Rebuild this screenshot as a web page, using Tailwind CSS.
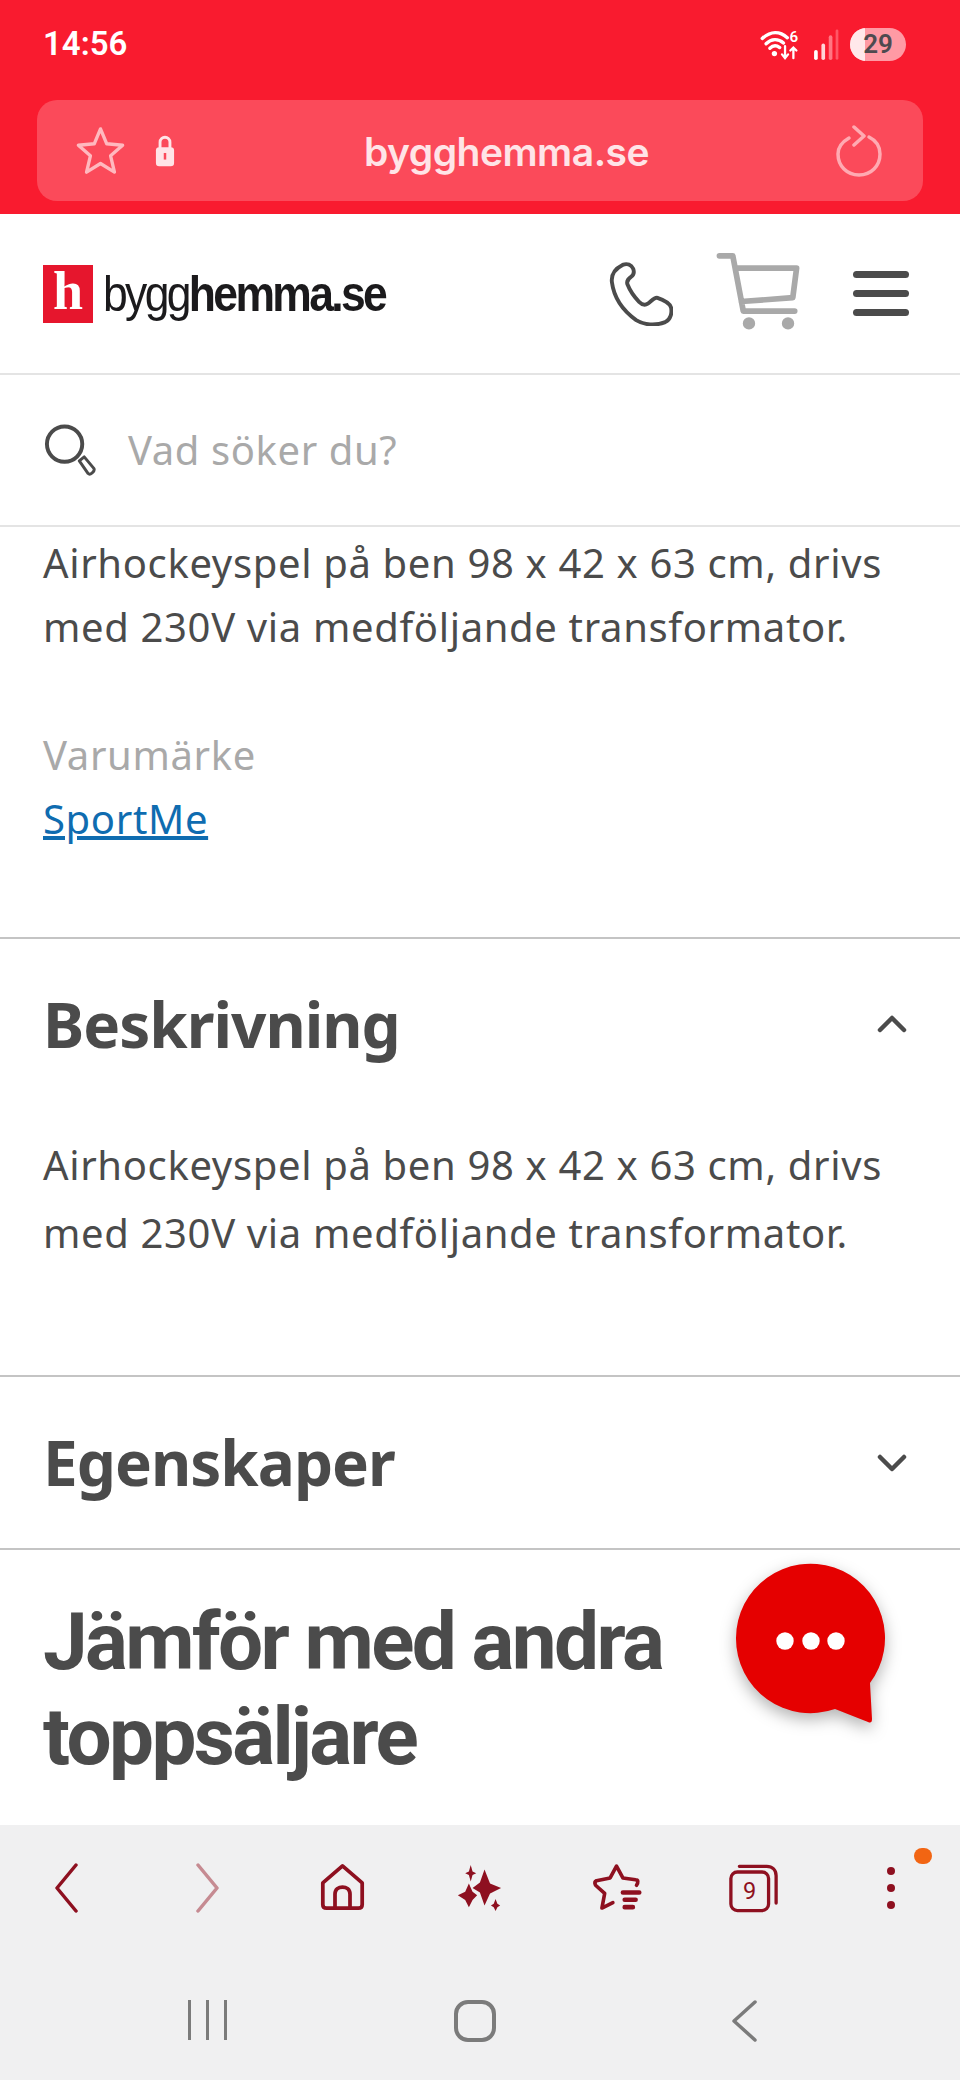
<!DOCTYPE html>
<html><head><meta charset="utf-8"><script src="https://cdn.jsdelivr.net/npm/@tailwindcss/browser@4"></script></head>
<body class="bg-white">
<div class="relative w-[960px] h-[2080px] overflow-hidden bg-white flex flex-col font-['Noto_Sans',sans-serif]">
  <div class="h-[214px] bg-[#f91b2f] shrink-0 flex flex-col">
    <div class="h-[100px] shrink-0 pl-[43px] pr-[54px] flex items-center justify-between">
      <span class="text-white text-[33px] font-semibold font-['Roboto',sans-serif] mt-[-13px]">14:56</span>
      <div class="flex items-center mt-[-12px]">
        <svg width="44" height="31" viewBox="0 0 58 40" fill="none" stroke="#fff" stroke-linecap="round"><path d="M3 12C14 2 26 2 36 11" stroke-width="4.5"/><path d="M8 19C15 12 24 12 31 18" stroke-width="4.5"/><path d="M13 25C17 21 22 21 26 24" stroke-width="4.5"/><circle cx="19" cy="32" r="3.5" fill="#fff" stroke="none"/><path d="M33 22V37M29 33L33 38L37 33M44 38V25M40 28L44 24L48 28" stroke-width="3"/><text x="39" y="17" font-size="20" font-weight="600" font-family="Roboto" fill="#fff" stroke="none">6</text></svg>
        <svg class="ml-[8px]" width="28" height="33" viewBox="0 0 28 36" fill="none" stroke-linecap="round" stroke-width="4"><path d="M3 33V26" stroke="#fff"/><path d="M11 33V19" stroke="#ffd5d8"/><path d="M19 33V10" stroke="#ff7682"/><path d="M26 33V3" stroke="#ff5666" stroke-width="3"/></svg>
        <div class="ml-[10px] w-[56px] h-[33px] rounded-full bg-[#ff9aa4] overflow-hidden relative flex items-center justify-center">
          <div class="absolute left-0 top-0 bottom-0 w-[15px] bg-[#ffe8ea]"></div>
          <span class="relative text-[#4e4a4f] text-[26px] font-semibold font-['Roboto',sans-serif] leading-none">29</span>
        </div>
      </div>
    </div>
    <div class="mx-[37px] h-[101px] rounded-[20px] bg-[#fb4a5a] flex items-center pl-[38px] pr-[41px] relative">
      <svg width="51" height="50" viewBox="0 0 52 52" fill="none" stroke="#ffb9bf" stroke-width="3.5" stroke-linejoin="round"><path d="M26 3L32.5 18.5L49 20L36.5 31L40.5 48L26 39L11.5 48L15.5 31L3 20L19.5 18.5Z"/></svg>
      <svg class="ml-[26px]" width="26" height="33" viewBox="0 0 24 40" fill="none"><path d="M6 17V10C6 2 18 2 18 10V17" stroke="#ffe4e7" stroke-width="3.5"/><rect x="1" y="16" width="22" height="23" rx="4" fill="#ffe4e7"/><rect x="10.5" y="23" width="3" height="8" fill="#fb4a5a"/></svg>
      <span class="absolute left-0 right-0 pl-[53px] pt-[3px] text-center text-[39px] font-semibold text-[#ffe4e7] font-['Inter',sans-serif] tracking-[-0.5px]">bygghemma.se</span>
      <svg class="ml-auto" width="46" height="52" viewBox="0 0 46 52" fill="none" stroke="#ffaab2" stroke-width="3.5" stroke-linecap="round" stroke-linejoin="round"><path d="M13 13C6 17 2 22 2 29C2 41 11 50 23 50C35 50 44 41 44 29C44 22 41 16 33 12"/><path d="M18 2L28 11L18 20"/></svg>
    </div>
  </div>
  <header class="h-[159px] shrink-0 pl-[43px] pr-[51px] flex items-center">
    <div class="w-[50px] h-[58px] bg-[#e6162d] flex items-center justify-center shrink-0">
      <span class="text-white text-[54px] font-bold font-['Liberation_Serif',serif] leading-none mt-[-6px]">h</span>
    </div>
    <div class="ml-[10px] w-[281px] shrink-0 overflow-visible whitespace-nowrap"><span class="inline-block origin-left scale-x-[0.89] text-[50px] leading-none text-[#1b1a1c] font-['Liberation_Sans',sans-serif] tracking-[-3px] mt-[1px]">bygg<span class="font-bold">hemma.se</span></span></div>
    <svg class="ml-auto" width="64" height="64" viewBox="0 0 66 66" fill="none" stroke="#4b4b4b" stroke-width="4" stroke-linejoin="round"><path d="M14 3C6 7 2 13 3 21C5 36 14 50 28 60C36 65 48 66 58 62C64 59 65 52 64 47C63 43 56 39 50 37C47 36 44 40 40 43C37 45 34 44 31 41C26 36 21 28 19 23C18 20 20 17 23 15C26 13 26 10 25 7C23 3 19 1 14 3Z" /></svg>
    <svg class="ml-[43px] mt-[-3px]" width="85" height="80" viewBox="0 0 88 84" fill="none" stroke="#a9a9a9" stroke-width="6" stroke-linecap="round" stroke-linejoin="round"><path d="M3 4H17L28 62H82M21 17H84L80 48L26 52"/><circle cx="34" cy="75" r="3.5" fill="#a9a9a9"/><circle cx="75" cy="75" r="3.5" fill="#a9a9a9"/></svg>
    <div class="ml-[52px] w-[56px] flex flex-col gap-[12px]"><div class="h-[7px] rounded-full bg-[#4b4b4b]"></div><div class="h-[7px] rounded-full bg-[#4b4b4b]"></div><div class="h-[7px] rounded-full bg-[#4b4b4b]"></div></div>
  </header>
  <div class="h-[154px] shrink-0 border-y-2 border-[#e4e4e4] px-[43px] flex items-center">
    <svg width="53" height="52" viewBox="0 0 54 52" fill="none" stroke="#4b4b4b" stroke-width="4"><circle cx="22" cy="20" r="18"/><path d="M37 37L42 33L52 45C53 48 48 52 46 50Z" stroke-linejoin="round" stroke-width="3"/></svg>
    <span class="ml-[32px] text-[40px] text-[#a9a9a9] tracking-[0.6px]">Vad söker du?</span>
  </div>
  <div class="px-[43px] pt-[4px] h-[412px] shrink-0 border-b-2 border-[#c4c4c4] text-[40px] leading-[64px] text-[#4b4b4b] tracking-[0.65px]">
    <p>Airhockeyspel på ben 98 x 42 x 63 cm, drivs<br>med 230V via medföljande transformator.</p>
    <p class="mt-[64px] text-[#a9a9a9]">Varumärke</p>
    <a class="text-[#0f6cb0] underline">SportMe</a>
  </div>
  <section class="h-[438px] shrink-0 border-b-2 border-[#c4c4c4] px-[43px] text-[#4b4b4b]">
    <div class="h-[170px] flex items-center justify-between">
      <h2 class="text-[62px] font-bold tracking-[-1px]">Beskrivning</h2>
      <svg class="mr-[10px]" width="30" height="20" viewBox="0 0 30 20" fill="none" stroke="#4b4b4b" stroke-width="4.5" stroke-linecap="round" stroke-linejoin="round"><path d="M3 16L15 4L27 16"/></svg>
    </div>
    <p class="text-[40px] leading-[68px] tracking-[0.65px] mt-[22px]">Airhockeyspel på ben 98 x 42 x 63 cm, drivs<br>med 230V via medföljande transformator.</p>
  </section>
  <section class="h-[173px] shrink-0 border-b-2 border-[#c4c4c4] px-[43px] text-[#4b4b4b] flex items-center justify-between">
    <h2 class="text-[62px] font-bold tracking-[-1px]">Egenskaper</h2>
    <svg class="mr-[10px]" width="30" height="20" viewBox="0 0 30 20" fill="none" stroke="#4b4b4b" stroke-width="4.5" stroke-linecap="round" stroke-linejoin="round"><path d="M3 4L15 16L27 4"/></svg>
  </section>
  <h1 class="px-[43px] pt-[45px] text-[80px] leading-[95px] font-bold text-[#4b4b4b] font-['Roboto',sans-serif] tracking-[-2.6px]">Jämför med andra<br>toppsäljare</h1>
  <div class="absolute left-0 right-0 bottom-0 h-[255px] bg-[#f0f0f1]">
    <div class="h-[175px] pl-[54px] pt-[38px] flex items-start relative">
      <svg width="24" height="50" viewBox="0 0 24 50" fill="none" stroke="#8e1020" stroke-width="3.5" stroke-linecap="round" stroke-linejoin="round"><path d="M22 2L3 25L22 48" /></svg>
      <svg class="ml-[117px]" width="25" height="50" viewBox="0 0 25 50" fill="none" stroke="#c68b92" stroke-width="3.5" stroke-linecap="round" stroke-linejoin="round"><path d="M3 2L22 25L3 48"/></svg>
      <svg class="ml-[100px]" width="45" height="49" viewBox="0 0 48 50" fill="none" stroke="#8e1020" stroke-width="4" stroke-linejoin="round"><path d="M3 20L24 2L45 20V43C45 46 43 47 41 47H7C5 47 3 46 3 43Z"/><path d="M16 47V32C16 22 32 22 32 32V47" /></svg>
      <svg class="ml-[91px]" width="46" height="50" viewBox="0 0 50 50" fill="#8e1020"><path d="M16 0L18 7L22 9L18 11L16 18L14 11L10 9L14 7Z"/><path d="M31 5L37 20L49 25L37 31L31 44L26 30L18 25L26 19Z"/><path d="M14 20L18 29L23 33L18 38L14 46L10 38L2 33L10 29Z"/><path d="M43 37L45 42L48 44L45 46L43 50L41 46L38 44L41 42Z"/></svg>
      <svg class="ml-[89px]" width="51" height="50" viewBox="0 0 56 52" fill="none" stroke="#8e1020" stroke-width="4" stroke-linecap="round" stroke-linejoin="round"><path d="M50 23C52 20 52 17 49 17L35 15L28 2L21 15L6 18C4 19 4 21 5 23L15 32L12 48L24 42"/><path d="M35 31H53M37 39H49M37 47H46" stroke-width="5"/></svg>
      <svg class="ml-[87px]" width="49" height="50" viewBox="0 0 52 52" fill="none" stroke="#8e1020" stroke-width="3.5" stroke-linejoin="round"><rect x="2" y="9" width="40" height="41" rx="7"/><path d="M11 3H40C46 3 50 7 50 13V42" stroke-linecap="round"/><text x="22" y="38" text-anchor="middle" font-size="25" font-family="Roboto" fill="#8e1020" stroke="none">9</text></svg>
      <div class="ml-[109px] w-[8px] h-[42px] mt-[4px] flex flex-col justify-between items-center">
        <span class="w-[8px] h-[8px] rounded-full bg-[#8e1020]"></span><span class="w-[8px] h-[8px] rounded-full bg-[#8e1020]"></span><span class="w-[8px] h-[8px] rounded-full bg-[#8e1020]"></span>
      </div>
      <span class="absolute right-[28px] top-[23px] w-[18px] h-[16px] rounded-full bg-[#f26513]"></span>
    </div>
    <div class="pl-[188px] flex items-start">
      <span class="w-[3px] h-[40px] bg-[#7b7b7b]"></span><span class="w-[3px] h-[40px] bg-[#7b7b7b] ml-[15px]"></span><span class="w-[3px] h-[40px] bg-[#7b7b7b] ml-[15px]"></span>
      <span class="ml-[227px] w-[42px] h-[42px] rounded-[14px] border-[4px] border-[#7b7b7b]"></span>
      <svg class="ml-[235px]" width="26" height="42" viewBox="0 0 26 42" fill="none" stroke="#7b7b7b" stroke-width="3.5" stroke-linecap="round" stroke-linejoin="round"><path d="M24 2L3 21L24 40"/></svg>
    </div>
  </div>
  <svg class="absolute left-[730px] top-[1558px] drop-shadow-[0_6px_8px_rgba(0,0,0,0.3)]" width="156" height="170" viewBox="0 0 156 170" fill="#e50000"><path d="M6 80A74.5 74.5 0 1 1 140 125L142 161Q142 166 138 164L105 151A74.5 74.5 0 0 1 6 80Z"/><circle cx="55" cy="83" r="8.7" fill="#fff"/><circle cx="81" cy="83" r="8.7" fill="#fff"/><circle cx="106" cy="83" r="8.7" fill="#fff"/></svg>
</div>
</body></html>
